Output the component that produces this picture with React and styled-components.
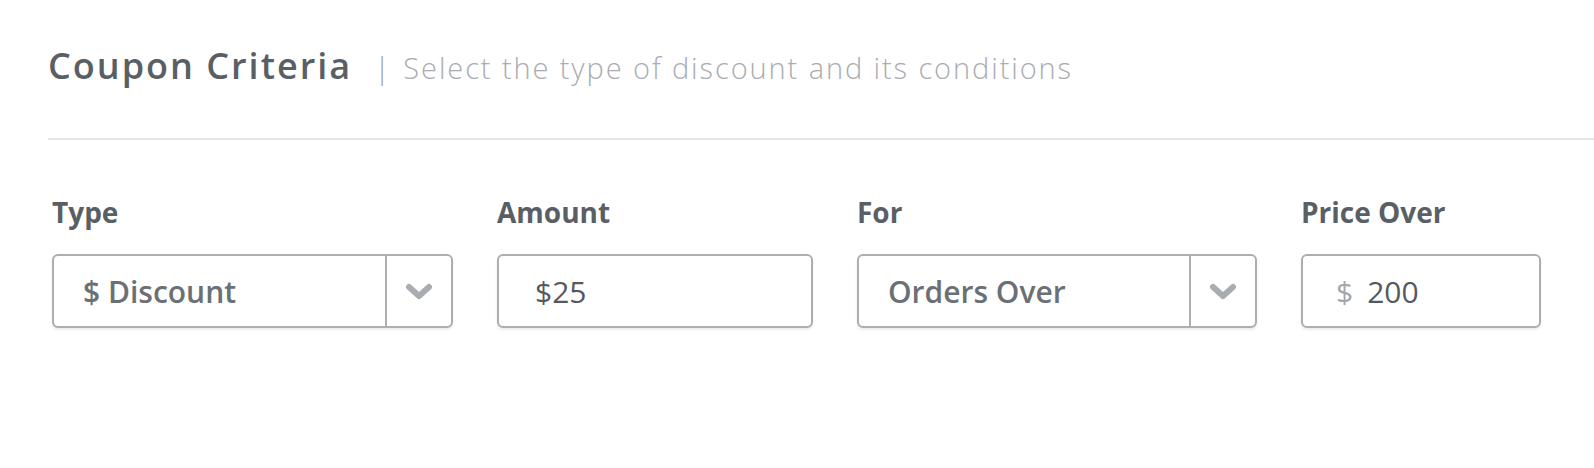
import React from "react"
import styled, { createGlobalStyle } from "styled-components"

const GlobalStyle = createGlobalStyle`
  html, body {
    margin: 0;
    padding: 0;
    background: #ffffff;
  }
  body {
    font-family: "Open Sans", "Liberation Sans", sans-serif;
  }
`

const Chevron = () => (
  <svg width="28" height="18" viewBox="0 0 28 18">
    <polyline
      points="4,4 14,13 24,4"
      fill="none"
      stroke="#a9acb0"
      strokeWidth="6"
      strokeLinecap="round"
      strokeLinejoin="round"
    />
  </svg>
)

const fields = [
  { label: "Type", kind: "select", value: "$ Discount", width: 401 },
  { label: "Amount", kind: "input", value: "$25", width: 316 },
  { label: "For", kind: "select", value: "Orders Over", width: 400 },
  { label: "Price Over", kind: "prefixed", value: "200", width: 240 },
]

const CouponCriteria = () => {
  return (
    <Page>
      <GlobalStyle />
      <Header>
        <Title>Coupon Criteria</Title>
        <Pipe>|</Pipe>
        <Subtitle>Select the type of discount and its conditions</Subtitle>
      </Header>
      <FieldsRow>
        {fields.map((f) => (
          <Field key={f.label}>
            <Label>{f.label}</Label>
            <Box $width={f.width}>
              {f.kind === "select" && (
                <>
                  <SelectValue>{f.value}</SelectValue>
                  <Toggle>
                    <Chevron />
                  </Toggle>
                </>
              )}
              {f.kind === "input" && <InputValue $pad={36}>{f.value}</InputValue>}
              {f.kind === "prefixed" && (
                <InputValue $pad={33}>
                  <Prefix>$</Prefix>
                  {f.value}
                </InputValue>
              )}
            </Box>
          </Field>
        ))}
      </FieldsRow>
    </Page>
  )
}

export default CouponCriteria

const Page = styled.div`
  width: 1594px;
  height: 468px;
  padding-left: 48px;
  box-sizing: border-box;
  overflow: hidden;
`

const Header = styled.div`
  display: flex;
  align-items: baseline;
  height: 140px;
  box-sizing: border-box;
  padding-top: 47px;
  border-bottom: 2px solid #e4e5e6;
`

const Title = styled.h1`
  margin: 0;
  font-size: 36px;
  font-weight: 600;
  line-height: 1;
  letter-spacing: 2px;
  color: #595f65;
`

const Pipe = styled.span`
  margin: 0 13px 0 22px;
  font-size: 30px;
  font-weight: 300;
  color: #a4a7ab;
`

const Subtitle = styled.span`
  font-size: 29px;
  font-weight: 300;
  letter-spacing: 1.9px;
  color: #a9acb0;
`

const FieldsRow = styled.div`
  display: flex;
  gap: 44px;
  padding: 54px 0 0 4px;
`

const Field = styled.div`
  display: flex;
  flex-direction: column;
`

const Label = styled.div`
  font-size: 28px;
  font-weight: 700;
  line-height: 36px;
  color: #595f65;
  margin-bottom: 24px;
`

const Box = styled.div`
  display: flex;
  align-items: stretch;
  width: ${(p) => p.$width}px;
  height: 74px;
  box-sizing: border-box;
  border: 2px solid #acaeb0;
  border-radius: 6px;
  box-shadow: 0 2px 3px rgba(0, 0, 0, 0.08);
  background: #ffffff;
`

const SelectValue = styled.div`
  flex: 1;
  display: flex;
  align-items: center;
  padding-left: 29px;
  font-size: 30px;
  font-weight: 600;
  color: #6b7076;
`

const Toggle = styled.div`
  width: 64px;
  display: flex;
  align-items: center;
  justify-content: center;
  border-left: 2px solid #acaeb0;
  padding-top: 2px;
`

const InputValue = styled.div`
  display: flex;
  align-items: center;
  padding-left: ${(p) => p.$pad}px;
  font-size: 30px;
  font-weight: 400;
  color: #55595e;
`

const Prefix = styled.span`
  color: #a3a6aa;
  margin-right: 14px;
`
